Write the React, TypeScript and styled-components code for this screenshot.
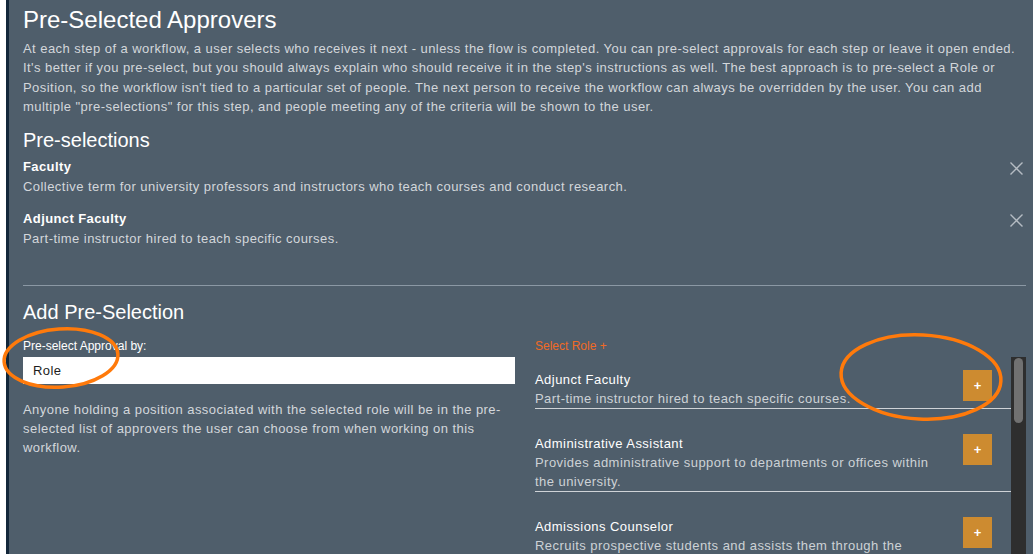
import React from "react";
import styled, { createGlobalStyle } from "styled-components";

const GlobalStyle = createGlobalStyle`
  html, body { margin: 0; padding: 0; background: #ffffff; }
  body { font-family: "Liberation Sans", Arial, sans-serif; overflow: hidden; }
  * { box-sizing: border-box; }
`;

const Page = styled.div`
  position: relative;
  height: 554px;
  padding-left: 6px;
  background: #ffffff;
  overflow: hidden;
`;

const Panel = styled.div`
  height: 100%;
  background: #4f5e6b;
  border-left: 3px solid #13273a;
  padding: 5px 7px 0 14px;
  color: #ffffff;
`;

const Title = styled.h1`
  margin: 0;
  font-size: 24px;
  line-height: 30px;
  font-weight: 400;
  color: #ffffff;
`;

const SectionTitle = styled.h2<{ $top?: number }>`
  margin: ${(p) => p.$top ?? 0}px 0 0 0;
  font-size: 20px;
  line-height: 26px;
  font-weight: 400;
  color: #ffffff;
`;

const Intro = styled.p`
  margin: 4px 0 0 0;
  font-size: 13px;
  line-height: 19.3px;
  letter-spacing: 0.45px;
  color: #d3d7db;
  white-space: nowrap;
`;

const Line = styled.span`
  display: block;
`;

const Selections = styled.div`
  display: flex;
  flex-direction: column;
  gap: 13px;
  margin-top: 4px;
`;

const Selection = styled.div`
  display: flex;
  align-items: flex-start;
  justify-content: space-between;
`;

const SelectionText = styled.div`
  display: flex;
  flex-direction: column;
`;

const SelectionName = styled.div`
  font-size: 13px;
  line-height: 20px;
  font-weight: 700;
  letter-spacing: 0.4px;
  color: #ffffff;
`;

const SelectionDesc = styled.div`
  font-size: 13px;
  line-height: 19px;
  letter-spacing: 0.45px;
  color: #d3d7db;
`;

const RemoveButton = styled.button`
  border: 0;
  background: transparent;
  padding: 0;
  margin: 3px 2px 0 0;
  width: 16px;
  height: 16px;
  display: flex;
  align-items: center;
  justify-content: center;
  color: #b5bcc3;
  cursor: pointer;
`;

const Divider = styled.hr`
  margin: 37px 0 0 0;
  border: 0;
  border-top: 1px solid #8b98a4;
`;

const Columns = styled.div`
  display: grid;
  grid-template-columns: 492px 1fr;
  column-gap: 20px;
  margin-top: 13px;
`;

const Column = styled.div`
  display: flex;
  flex-direction: column;
`;

const FieldLabel = styled.label`
  font-size: 12px;
  line-height: 16px;
  color: #ffffff;
`;

const SelectBox = styled.div`
  margin-top: 3px;
  height: 27px;
  background: #ffffff;
  color: #1d1d1d;
  font-size: 13px;
  line-height: 27px;
  letter-spacing: 0.4px;
  padding-left: 10px;
`;

const HelpText = styled.p`
  margin: 16px 0 0 0;
  font-size: 13px;
  line-height: 19px;
  letter-spacing: 0.45px;
  color: #d3d7db;
`;

const AddLink = styled.div`
  font-size: 12px;
  line-height: 16px;
  color: #ef6a25;
`;

const ListFrame = styled.div`
  margin-top: 3px;
  display: flex;
  height: 260px;
`;

const List = styled.div`
  flex: 1;
  display: flex;
  flex-direction: column;
`;

const Scrollbar = styled.div`
  width: 15px;
  background: #2e2e2e;
  padding: 1px 3px 0 3px;
`;

const Thumb = styled.div`
  height: 65px;
  border-radius: 5px;
  background: #717171;
`;

const RoleItem = styled.div`
  display: flex;
  align-items: flex-start;
  justify-content: space-between;
  padding-top: 13px;
  margin-bottom: 12px;
  border-bottom: 1px solid #cfd3d7;
`;

const RoleText = styled.div`
  width: 400px;
  display: flex;
  flex-direction: column;
`;

const RoleName = styled.div`
  font-size: 13px;
  line-height: 19px;
  letter-spacing: 0.45px;
  color: #ffffff;
`;

const RoleDesc = styled.div`
  font-size: 13px;
  line-height: 19px;
  letter-spacing: 0.45px;
  color: #cdd2d6;
`;

const PlusButton = styled.button`
  width: 29px;
  height: 31px;
  margin: 0 19px 0 0;
  border: 0;
  padding: 0;
  background: #cd8b30;
  color: #ffffff;
  font-family: "Liberation Sans", Arial, sans-serif;
  font-size: 13px;
  font-weight: 700;
  cursor: pointer;
`;

const Annotations = styled.svg`
  position: absolute;
  left: 0;
  top: 0;
  pointer-events: none;
`;

const XIcon = () => (
  <svg width="13" height="13" viewBox="0 0 13 13" fill="none">
    <path d="M0.5 0.5L12.5 12.5M12.5 0.5L0.5 12.5" stroke="currentColor" strokeWidth="1.4" />
  </svg>
);

const roles = [
  { name: "Adjunct Faculty", desc: "Part-time instructor hired to teach specific courses." },
  { name: "Administrative Assistant", desc: "Provides administrative support to departments or offices within the university." },
  { name: "Admissions Counselor", desc: "Recruits prospective students and assists them through the admissions process." },
];

const selections = [
  { name: "Faculty", desc: "Collective term for university professors and instructors who teach courses and conduct research." },
  { name: "Adjunct Faculty", desc: "Part-time instructor hired to teach specific courses." },
];

export default function App() {
  return (
    <>
      <GlobalStyle />
      <Page>
        <Panel>
          <Title>Pre-Selected Approvers</Title>
          <Intro>
            <Line>At each step of a workflow, a user selects who receives it next - unless the flow is completed. You can pre-select approvals for each step or leave it open ended.</Line>
            <Line>It's better if you pre-select, but you should always explain who should receive it in the step's instructions as well. The best approach is to pre-select a Role or</Line>
            <Line>Position, so the workflow isn't tied to a particular set of people. The next person to receive the workflow can always be overridden by the user. You can add</Line>
            <Line>multiple "pre-selections" for this step, and people meeting any of the criteria will be shown to the user.</Line>
          </Intro>

          <SectionTitle $top={11}>Pre-selections</SectionTitle>
          <Selections>
            {selections.map((s) => (
              <Selection key={s.name}>
                <SelectionText>
                  <SelectionName>{s.name}</SelectionName>
                  <SelectionDesc>{s.desc}</SelectionDesc>
                </SelectionText>
                <RemoveButton aria-label="Remove">
                  <XIcon />
                </RemoveButton>
              </Selection>
            ))}
          </Selections>

          <Divider />

          <SectionTitle $top={13}>Add Pre-Selection</SectionTitle>
          <Columns>
            <Column>
              <FieldLabel>Pre-select Approval by:</FieldLabel>
              <SelectBox>Role</SelectBox>
              <HelpText>
                Anyone holding a position associated with the selected role will be in the pre-selected list of approvers the user can choose from when working on this workflow.
              </HelpText>
            </Column>
            <Column>
              <AddLink>Select Role +</AddLink>
              <ListFrame>
                <List>
                  {roles.map((r) => (
                    <RoleItem key={r.name}>
                      <RoleText>
                        <RoleName>{r.name}</RoleName>
                        <RoleDesc>{r.desc}</RoleDesc>
                      </RoleText>
                      <PlusButton aria-label="Add">+</PlusButton>
                    </RoleItem>
                  ))}
                </List>
                <Scrollbar>
                  <Thumb />
                </Scrollbar>
              </ListFrame>
            </Column>
          </Columns>
        </Panel>
        <Annotations width="1033" height="554" viewBox="0 0 1033 554">
          <ellipse cx="61" cy="358" rx="57" ry="29" transform="rotate(-4 61 358)" fill="none" stroke="#ff7a0b" strokeWidth="3.5" />
          <ellipse cx="921" cy="377" rx="80" ry="42" transform="rotate(3 921 377)" fill="none" stroke="#ff7a0b" strokeWidth="3.5" />
        </Annotations>
      </Page>
    </>
  );
}
